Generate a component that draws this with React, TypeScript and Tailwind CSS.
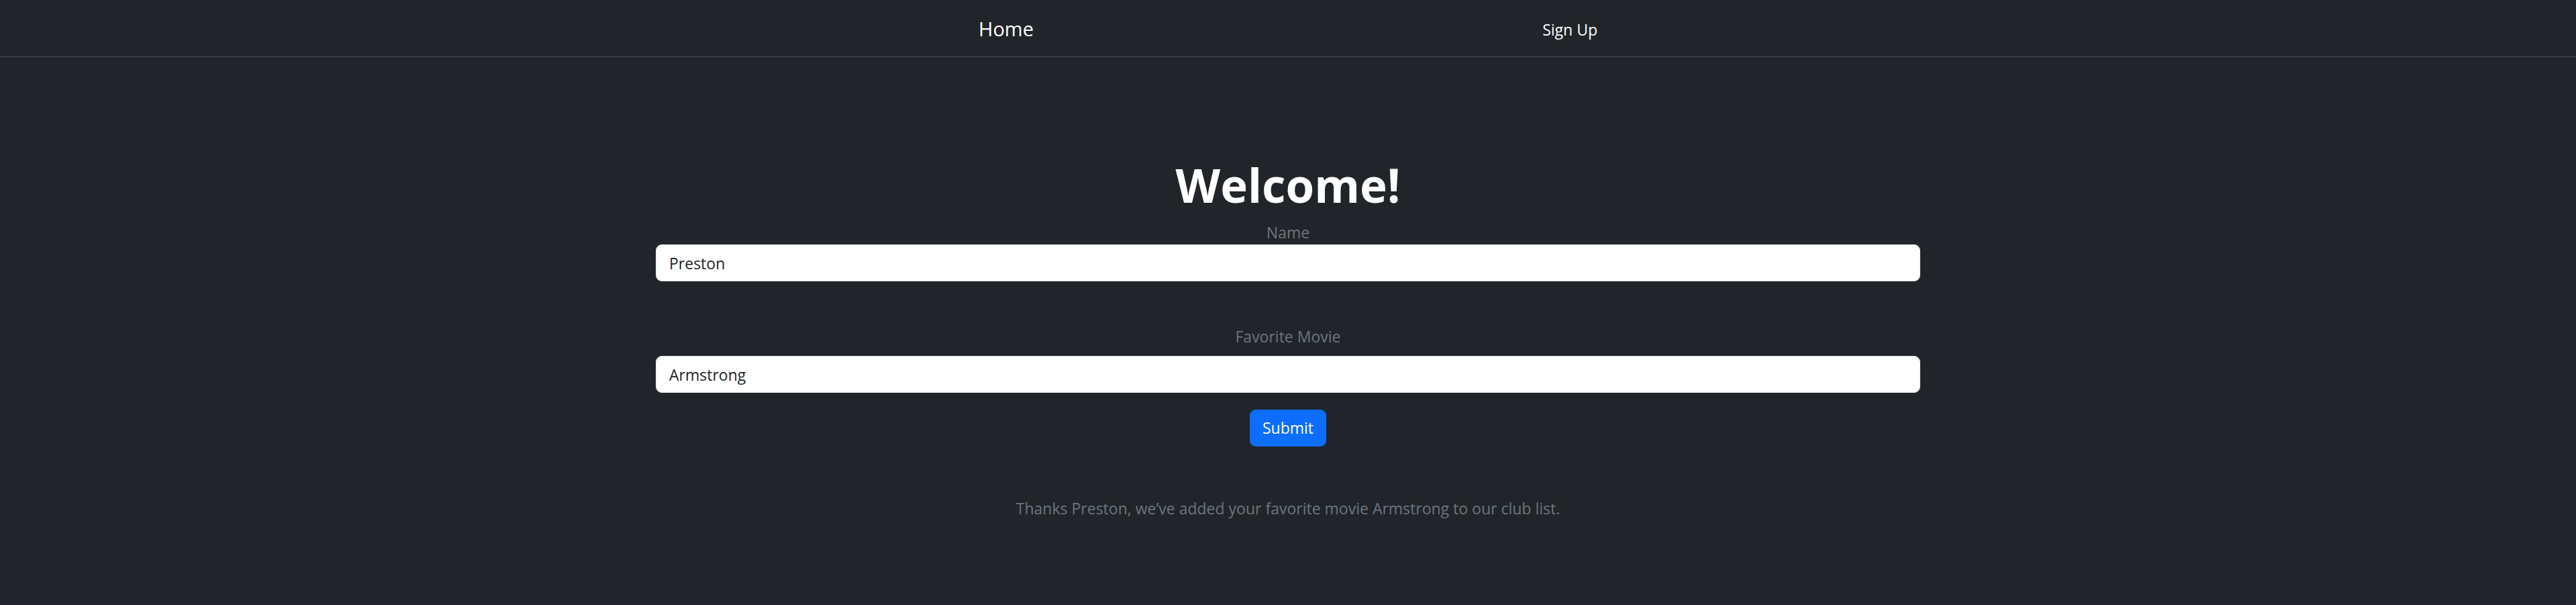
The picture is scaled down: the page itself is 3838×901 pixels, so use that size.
import { useState } from 'react';

const font = { fontFamily: '"Open Sans", "Noto Sans", "Liberation Sans", sans-serif' };

export default function App() {
    const [name, setName] = useState('Preston');
    const [movie, setMovie] = useState('Armstrong');

    return (
        <div className="min-h-[901px] w-full bg-[#212529] text-white" style={font}>
            {/* Navbar */}
            <nav className="h-[85px] border-b border-[#4a4f55] flex items-center justify-center">
                <div className="w-[922px] flex items-center justify-between">
                    <a href="#" className="text-[29px] leading-[45px] text-white">Home</a>
                    <a href="#" className="text-[23px] leading-[36px] mt-[3px] text-white">Sign Up</a>
                </div>
            </nav>

            {/* Form */}
            <main className="flex flex-col items-center pt-[147px]">
                <h1 className="text-[69px] leading-[86px] font-bold text-white">Welcome!</h1>
                <form className="w-[1884px] flex flex-col items-center mt-[10px]" onSubmit={(e) => e.preventDefault()}>
                    <label className="text-[23px] leading-[36px] text-[#6c757d]">Name</label>
                    <input
                        value={name}
                        onChange={(e) => setName(e.target.value)}
                        className="w-full h-[55px] bg-white border border-[#dee2e6] rounded-[9px] px-[19px] text-[23px] text-[#212529] outline-none"
                    />
                    <label className="text-[23px] leading-[36px] text-[#6c757d] mt-[64px] mb-[11px]">Favorite Movie</label>
                    <input
                        value={movie}
                        onChange={(e) => setMovie(e.target.value)}
                        className="w-full h-[55px] bg-white border border-[#dee2e6] rounded-[9px] px-[19px] text-[23px] text-[#212529] outline-none"
                    />
                    <button
                        type="submit"
                        className="mt-[25px] w-[114px] h-[55px] bg-[#0d6efd] rounded-[9px] text-[23px] text-white"
                    >
                        Submit
                    </button>
                </form>
                <p className="mt-[74px] text-[23px] leading-[36px] text-[#6c757d]">
                    Thanks {name}, we’ve added your favorite movie {movie} to our club list.
                </p>
            </main>
        </div>
    );
}
